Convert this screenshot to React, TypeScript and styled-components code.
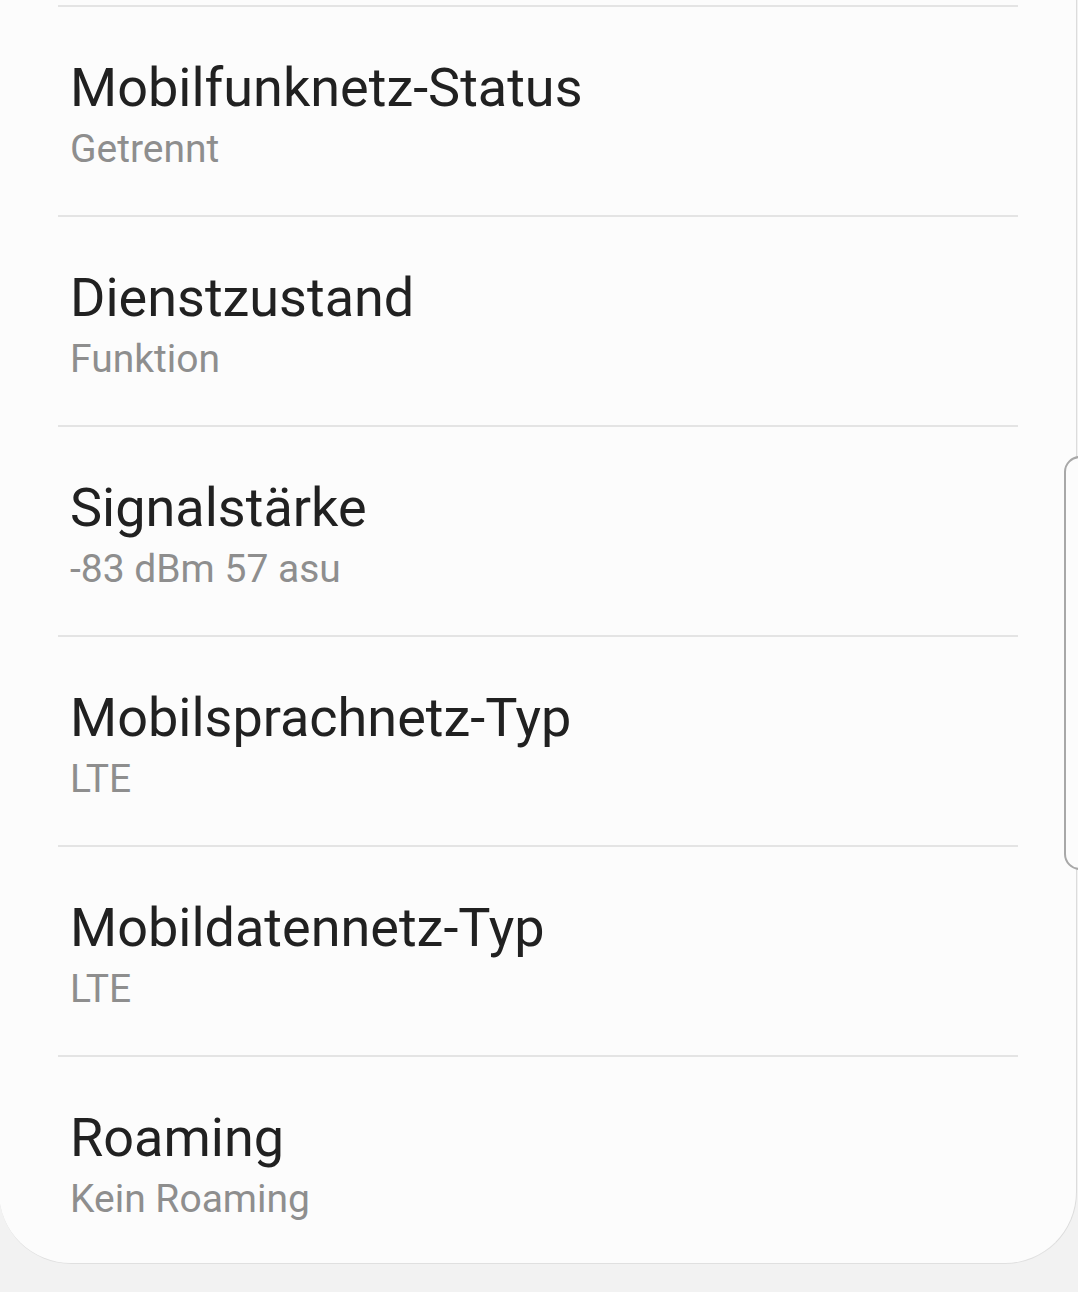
import styled, { createGlobalStyle } from "styled-components";

const GlobalStyle = createGlobalStyle`
  html, body {
    margin: 0;
    padding: 0;
    background: #f2f2f2;
  }
  body {
    font-family: Roboto, "Noto Sans", "Liberation Sans", sans-serif;
    -webkit-font-smoothing: antialiased;
  }
`;

const Screen = styled.div`
  position: relative;
  width: 1078px;
  height: 1292px;
  overflow: hidden;
  background: #f2f2f2;
`;

const Card = styled.section`
  box-sizing: border-box;
  width: 1078px;
  margin-left: -1px;
  padding-top: 5px;
  background: #fcfcfc;
  border-right: 1px solid #dcdcdc;
  border-bottom: 1px solid #e0e0e0;
  border-radius: 0 0 72px 72px;
`;

const Row = styled.div<{ $height: number }>`
  display: flex;
  flex-direction: column;
  height: ${(p) => p.$height}px;
  padding: 0 58px 0 59px;
`;

const Divider = styled.div`
  height: 2px;
  background: #e4e4e4;
  margin-bottom: 49px;
`;

const Title = styled.div`
  padding-left: 12px;
  font-size: 54px;
  line-height: 64px;
  color: #212121;
  white-space: nowrap;
`;

const Summary = styled.div`
  padding-left: 12px;
  margin-top: 5px;
  font-size: 39px;
  line-height: 48px;
  color: #8e8e8e;
  white-space: nowrap;
`;

const ScrollHandle = styled.div`
  position: absolute;
  top: 456px;
  right: -4px;
  width: 18px;
  height: 414px;
  box-sizing: border-box;
  border: 2px solid #a8a8a8;
  border-radius: 16px 0 0 16px;
  background: #fcfcfc;
`;

const items = [
  { title: "Mobilfunknetz-Status", value: "Getrennt" },
  { title: "Dienstzustand", value: "Funktion" },
  { title: "Signalstärke", value: "-83 dBm 57 asu" },
  { title: "Mobilsprachnetz-Typ", value: "LTE" },
  { title: "Mobildatennetz-Typ", value: "LTE" },
  { title: "Roaming", value: "Kein Roaming" },
];

function App() {
  return (
    <Screen>
      <GlobalStyle />
      <Card>
        {items.map((item, i) => (
          <Row key={item.title} $height={i === items.length - 1 ? 208 : 210}>
            <Divider />
            <Title>{item.title}</Title>
            <Summary>{item.value}</Summary>
          </Row>
        ))}
      </Card>
      <ScrollHandle />
    </Screen>
  );
}

export default App;
